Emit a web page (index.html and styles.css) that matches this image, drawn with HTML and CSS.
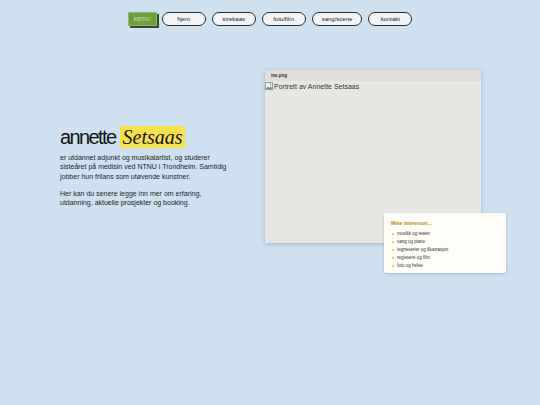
FILE: index.html
```html
<!DOCTYPE html>
<html lang="no">
<head>
  <meta charset="UTF-8">
  <meta name="viewport" content="width=device-width, initial-scale=1.0">
  <title>Annette Setsaas</title>
  <link rel="stylesheet" href="styles.css">
</head>
<body>
  <!-- Meny -->
  <nav class="nav">
    <button class="menu-button">MENU</button>
    <a class="pill" href="#">hjem</a>
    <a class="pill" href="#">strekaas</a>
    <a class="pill" href="#">foto/film</a>
    <a class="pill" href="#">sang/scene</a>
    <a class="pill" href="#">kontakt</a>
  </nav>

  <div class="main">
    <div class="intro">
      <h1>annette <span class="surname">Setsaas</span></h1>
      <p>er utdannet adjunkt og musikalartist, og studerer sisteåret på medisin ved NTNU i Trondheim. Samtidig jobber hun frilans som utøvende kunstner.</p>
      <p>Her kan du senere legge inn mer om erfaring, utdanning, aktuelle prosjekter og booking.</p>
    </div>

    <div class="frame">
      <div class="frame-bar">me.png</div>
      <div class="broken">
        <svg width="8" height="8" viewBox="0 0 8 8">
          <rect x="0.5" y="0.5" width="7" height="7" fill="#f4f4f4" stroke="#9a9a9a"/>
          <path d="M1 7 L3 4.5 L4.5 6 L6 4 L7 7 Z" fill="#5a9e3a"/>
          <circle cx="5.5" cy="2.3" r="0.9" fill="#6aa0d8"/>
        </svg>
        <span>Portrett av Annette Setsaas</span>
      </div>

      <!-- Interesser -->
      <div class="card">
        <h3>Mine interesser...</h3>
        <ul>
          <li>musikk og teater</li>
          <li>sang og piano</li>
          <li>tegneserier og illustrasjon</li>
          <li>regissere og film</li>
          <li>foto og helse</li>
        </ul>
      </div>
    </div>
  </div>
</body>
</html>
```

FILE: styles.css
```css
html, body {
  min-height: 100%;
}
body {
  margin: 0;
  min-height: 405px;
  background-color: #cde1f1;
  font-family: "Liberation Sans", Arial, sans-serif;
  color: #222;
}
.nav {
  display: flex;
  justify-content: center;
  align-items: center;
  gap: 6px;
  padding-top: 11px;
  height: 15px;
}
.menu-button {
  width: 29px;
  height: 14px;
  margin-right: -1px;
  padding: 0;
  background-color: #6c9f3f;
  border: 1px solid #8dbb63;
  box-shadow: 2px 2px 0 #3b4a35;
  color: #cfe5b2;
  font-family: "Liberation Serif", serif;
  font-size: 6px;
  cursor: pointer;
}
.pill {
  display: flex;
  align-items: center;
  justify-content: center;
  box-sizing: border-box;
  min-width: 44px;
  height: 14px;
  padding: 0 9px;
  border: 1px solid #2a2a2a;
  border-radius: 7px;
  background-color: #f1f4f6;
  color: #222;
  font-size: 6px;
  text-decoration: none;
}
.main {
  display: flex;
  align-items: flex-start;
  margin-top: 44px;
}
.intro {
  width: 175px;
  margin-left: 60px;
  padding-top: 56px;
}
h1 {
  margin: 0 0 5px 0;
  font-size: 20px;
  font-weight: normal;
  letter-spacing: -1.6px;
  line-height: 22px;
  color: #111;
}
.surname {
  display: inline-block;
  margin-left: 0;
  padding: 0 2px 0 3px;
  background-color: #f8e24a;
  font-family: "Liberation Serif", serif;
  font-style: italic;
  font-size: 20px;
  letter-spacing: 0;
}
.intro p {
  margin: 0 0 8px 0;
  font-size: 7px;
  line-height: 9.3px;
  color: #1e1e1e;
}
.frame {
  position: relative;
  width: 216px;
  height: 173px;
  margin-left: 30px;
  background-color: #e9e7e3;
  box-shadow: 0 1px 4px rgba(60, 80, 100, 0.3);
}
.frame-bar {
  height: 11px;
  padding-left: 6px;
  background-color: #e0dedb;
  font-size: 4.5px;
  font-weight: bold;
  line-height: 11px;
  color: #333;
}
.broken {
  display: flex;
  align-items: center;
  gap: 1px;
  padding-top: 1px;
  font-size: 7px;
  color: #333;
}
.card {
  position: absolute;
  left: 119px;
  top: 143px;
  width: 111px;
  height: 52px;
  padding: 4px 4px 4px 7px;
  background-color: #fffdf7;
  border-radius: 2px;
  box-shadow: 0 1px 3px rgba(60, 80, 100, 0.25);
}
.card h3 {
  margin: 3px 0 4px 0;
  font-size: 5px;
  color: #b58a18;
}
.card ul {
  margin: 0;
  padding: 0;
  list-style: none;
}
.card li {
  position: relative;
  padding-left: 6px;
  font-size: 4.5px;
  line-height: 8px;
  color: #333;
}
.card li::before {
  content: "";
  position: absolute;
  left: 1px;
  top: 3px;
  width: 2px;
  height: 2px;
  border-radius: 1px;
  background-color: #e8c22a;
}
```
